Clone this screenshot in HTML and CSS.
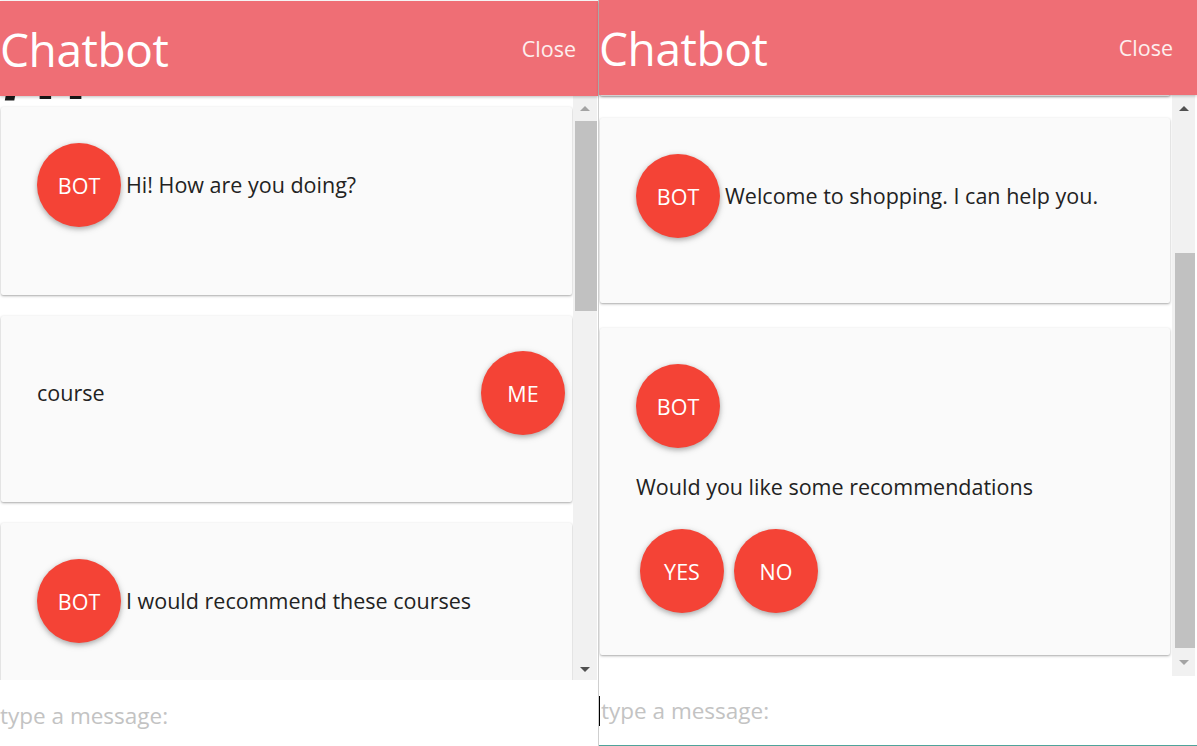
FILE: index.html
```html
<!DOCTYPE html>
<html lang="en">
<head>
<meta charset="utf-8">
<title>Chatbot</title>
<link rel="stylesheet" href="styles.css">
</head>
<body>
<div class="page">
  <section class="panel panel-left">
    <header class="bar">
      <span class="title">Chatbot</span>
      <span class="close">Close</span>
    </header>
    <div class="body">
      <div class="viewport">
        <div class="peek"><span>/II</span></div>
        <div class="list list-left">
          <div class="card">
            <div class="row">
              <div class="avatar">BOT</div>
              <div class="msg">Hi! How are you doing?</div>
            </div>
          </div>
          <div class="card card-me">
            <div class="row row-me">
              <div class="msg">course</div>
              <div class="avatar">ME</div>
            </div>
          </div>
          <div class="card">
            <div class="row">
              <div class="avatar">BOT</div>
              <div class="msg">I would recommend these courses</div>
            </div>
          </div>
        </div>
      </div>
      <div class="scrollbar">
        <div class="arrow arrow-up"></div>
        <div class="track"><div class="thumb thumb-left"></div></div>
        <div class="arrow arrow-down"></div>
      </div>
    </div>
    <div class="input-wrap">
      <input class="input" type="text" placeholder="type a message:">
    </div>
  </section>

  <section class="panel panel-right">
    <header class="bar">
      <span class="title">Chatbot</span>
      <span class="close">Close</span>
    </header>
    <div class="body">
      <div class="viewport">
        <div class="list list-right">
          <div class="card card-prev"></div>
          <div class="card card-welcome">
            <div class="row">
              <div class="avatar">BOT</div>
              <div class="msg">Welcome to shopping. I can help you.</div>
            </div>
          </div>
          <div class="card card-tall">
            <div class="avatar">BOT</div>
            <div class="msg msg-block">Would you like some recommendations</div>
            <div class="choices">
              <div class="avatar">YES</div>
              <div class="avatar">NO</div>
            </div>
          </div>
        </div>
      </div>
      <div class="scrollbar">
        <div class="arrow arrow-up"></div>
        <div class="track"><div class="thumb thumb-right"></div></div>
        <div class="arrow arrow-down"></div>
      </div>
    </div>
    <div class="input-wrap input-wrap-right">
      <span class="caret"></span>
      <input class="input" type="text" placeholder="type a message:">
    </div>
  </section>
</div>
</body>
</html>
```

FILE: styles.css
```css
* { box-sizing: border-box; }

html, body {
  margin: 0;
  padding: 0;
  background: #ffffff;
  font-family: "Open Sans", "Noto Sans", sans-serif;
}

.page {
  display: flex;
  width: 1197px;
  height: 746px;
  overflow: hidden;
}

.panel {
  display: flex;
  flex-direction: column;
  height: 746px;
  background: #fff;
}

.panel-left {
  width: 599px;
  border-right: 1px solid #cfcfcf;
}

.panel-right {
  width: 598px;
}

.bar {
  position: relative;
  z-index: 2;
  height: 95px;
  flex: 0 0 95px;
  margin-top: 1px;
  background: #ef6e75;
  display: flex;
  align-items: center;
  justify-content: space-between;
  padding: 0 22px 0 0;
  box-shadow: 0 1px 3px rgba(0, 0, 0, 0.25);
  color: #fff;
}

.panel-right .bar {
  margin-top: 0;
  padding-left: 0;
  padding-right: 24px;
}

.title {
  font-size: 46px;
  line-height: 1;
  letter-spacing: -0.4px;
}

.close {
  font-size: 21.5px;
  color: #fdeeee;
}

.body {
  display: flex;
  position: relative;
  z-index: 1;
}

.panel-left .body {
  flex: 0 0 584px;
  height: 584px;
}

.panel-right .body {
  flex: 0 0 581px;
  height: 581px;
}

.viewport {
  flex: 1 1 auto;
  overflow: hidden;
  position: relative;
}

.peek {
  height: 9px;
  overflow: hidden;
  position: relative;
  padding-left: 4px;
}

.peek span {
  display: block;
  font-family: "Liberation Sans", sans-serif;
  font-weight: bold;
  font-size: 80px;
  line-height: 80px;
  margin-top: -64px;
  letter-spacing: 8px;
  color: #1a1a1a;
}

.list {
  display: flex;
  flex-direction: column;
}

.list-left {
  padding: 2px 1px 0 1px;
  gap: 21px;
}

.list-right {
  padding: 0 2px 0 1px;
  margin-top: -98px;
}

.card {
  background: #fafafa;
  box-shadow: 0 1px 3px rgba(0, 0, 0, 0.28), 0 1px 1px rgba(0, 0, 0, 0.08);
  border-radius: 2px;
  padding: 36px 7px 68px 36px;
  flex: 0 0 auto;
}

.card-me {
  padding-top: 35px;
  padding-bottom: 67px;
}

.card-prev {
  height: 99px;
  padding: 0;
}

.list-right .card-welcome {
  margin-top: 22px;
  padding-bottom: 65px;
}

.list-right .card-prev {
  padding: 0;
}

.list-right .card-tall {
  margin-top: 25px;
  padding-bottom: 42px;
}

.row {
  display: flex;
  align-items: center;
  gap: 5px;
}

.row-me {
  justify-content: space-between;
}

.avatar {
  width: 84px;
  height: 84px;
  flex: 0 0 84px;
  border-radius: 50%;
  background: #f44336;
  color: #fff;
  display: flex;
  align-items: center;
  justify-content: center;
  font-size: 21.5px;
  box-shadow: 0 2px 5px rgba(0, 0, 0, 0.26), 0 2px 8px rgba(0, 0, 0, 0.1);
}

.msg {
  font-size: 21.5px;
  color: #222;
  line-height: 28px;
}

.msg-block {
  margin-top: 25px;
}

.choices {
  display: flex;
  gap: 10px;
  margin-top: 28px;
  padding-left: 4px;
}

.scrollbar {
  flex: 0 0 24px;
  width: 24px;
  background: #f1f1f1;
  display: flex;
  flex-direction: column;
  margin-right: 1px;
}

.panel-right .scrollbar {
  flex-basis: 23px;
  width: 23px;
  margin-right: 2px;
  padding-left: 1px;
}

.arrow {
  height: 24px;
  flex: 0 0 24px;
  display: flex;
  align-items: center;
  justify-content: center;
}

.arrow::before {
  content: "";
  width: 0;
  height: 0;
  border-left: 5px solid transparent;
  border-right: 5px solid transparent;
}

.arrow-up::before {
  border-bottom: 5px solid #a3a3a3;
}

.panel-right .arrow-up::before {
  border-bottom-color: #505050;
  margin-top: 3px;
}

.arrow-down::before {
  border-top: 5px solid #505050;
  margin-top: 2px;
}

.panel-right .arrow-down::before {
  border-top-color: #a3a3a3;
  margin-top: -4px;
}

.track {
  flex: 1 1 auto;
  position: relative;
  padding: 1px 0 0 2px;
}

.thumb {
  background: #c1c1c1;
  width: 100%;
}

.thumb-left {
  height: 190px;
}

.thumb-right {
  margin-top: 133px;
  height: calc(100% - 137px);
}

.input-wrap {
  flex: 1 1 auto;
  display: flex;
  align-items: center;
  background: #fff;
}

.input-wrap-right {
  border-bottom: 1px solid #4fa39a;
  position: relative;
  padding-top: 2px;
  padding-bottom: 2px;
}

.caret {
  width: 1px;
  height: 30px;
  background: #000;
  flex: 0 0 1px;
}

.input {
  border: none;
  outline: none;
  background: transparent;
  width: 100%;
  font-family: inherit;
  font-size: 22.5px;
  padding: 0;
  margin: 4px 0 0 0;
  color: #333;
}

.input-wrap-right .input {
  margin: 0 0 0 1px;
}

.input::placeholder {
  color: #c3c3c3;
}
```
